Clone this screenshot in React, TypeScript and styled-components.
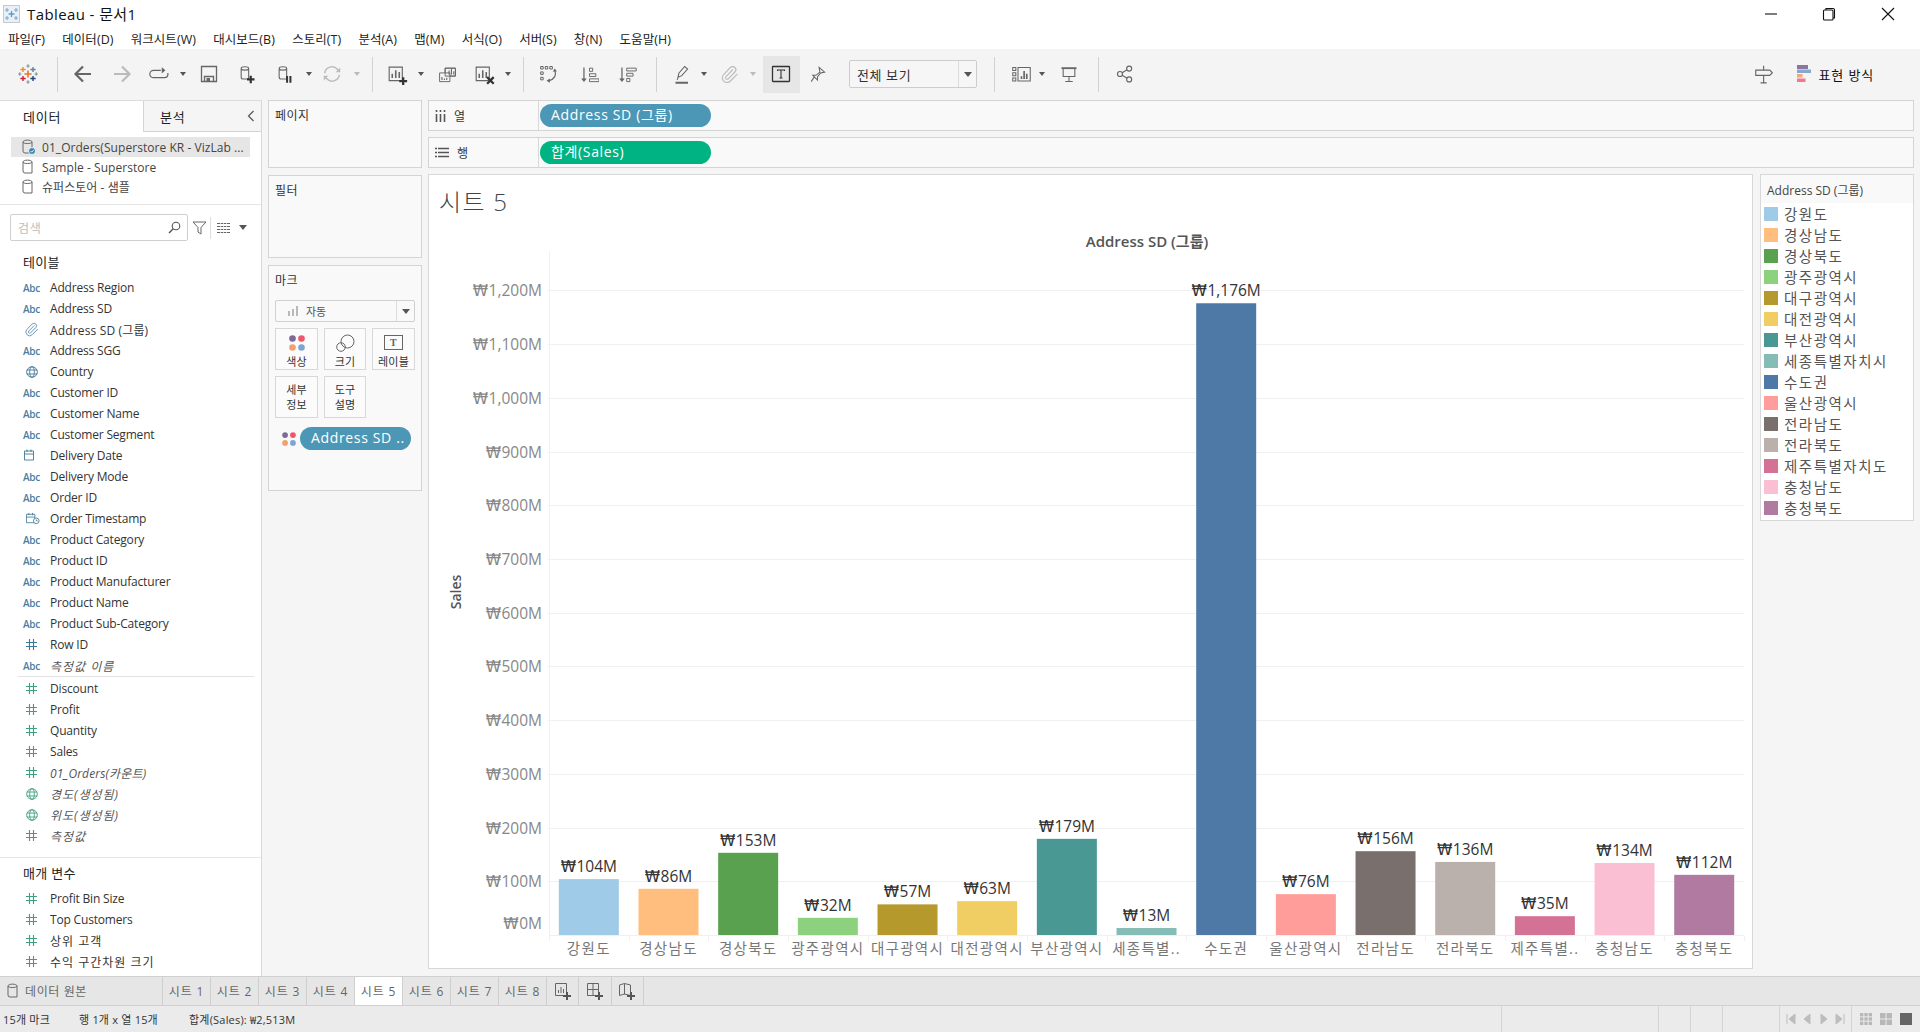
import React from 'react';
import styled, { createGlobalStyle } from 'styled-components';
import { Paperclip } from 'lucide-react';

const FONT = `"Open Sans", "Noto Sans CJK KR", sans-serif`;

const Global = createGlobalStyle`
  html, body { margin: 0; padding: 0; background: #f5f5f5; }
  body { font-family: ${FONT}; color: #333; overflow: hidden; }
  * { box-sizing: border-box; }
`;

const Page = styled.div`
  width: 1920px; height: 1032px; display: flex; flex-direction: column; overflow: hidden;
`;
const TitleBar = styled.div`
  height: 27px; background: #fff; display: flex; align-items: center; padding-left: 3px; gap: 7px; position: relative;
`;
const AppName = styled.span`
  font-size: 15px; color: #111; letter-spacing: 0.4px;
`;
const WinControls = styled.div`
  margin-left: auto; padding-right: 3px; display: flex; align-items: center; height: 100%;
`;
const WinBtn = styled.div`
  width: 58.5px; height: 27px; display: flex; align-items: center; justify-content: center;
`;
const MenuBar = styled.div`
  height: 22px; background: #fff; display: flex; align-items: center; padding-left: 8px; gap: 17.2px;
`;
const MenuItem = styled.span`
  font-size: 12.5px; color: #222; letter-spacing: 0.05px;
`;
const Toolbar = styled.div`
  height: 51px; background: #f4f4f4; display: flex; align-items: center; padding: 0 46px 1px 0;
`;
const Tool = styled.div<{ $w: number; $ml: number; $active?: boolean }>`
  width: ${p => p.$w}px; height: ${p => (p.$active ? 37 : 24)}px; margin-left: ${p => p.$ml}px; flex: none;
  display: flex; align-items: center; justify-content: center;
  background: ${p => (p.$active ? '#e6e6e6' : 'transparent')};
`;
const ToolSep = styled.div`
  width: 100%; height: 35px; background: #d2d2d2;
`;
const Combo = styled.div`
  width: 128px; height: 28px; border: 1px solid #cdcdcd; border-radius: 2px; display: flex; align-items: center; background: #f6f6f6;
`;
const ComboText = styled.span`
  flex: 1; padding-left: 7px; font-size: 13px; color: #333; letter-spacing: 0.6px;
`;
const ComboArrow = styled.div`
  width: 18px; height: 100%; border-left: 1px solid #dcdcdc; display: flex; align-items: center; justify-content: center;
`;
const Caret = styled.span<{ $c?: string }>`
  width: 0; height: 0; border-left: 4px solid transparent; border-right: 4px solid transparent;
  border-top: 5px solid ${p => p.$c || '#555'}; display: block;
`;
const SmallCaret = styled(Caret)`
  border-left-width: 3px; border-right-width: 3px; border-top-width: 4px;
`;
const ToolRight = styled.div`
  margin-left: auto; display: flex; align-items: center;
`;
const ShowMe = styled.div`
  display: flex; align-items: center; gap: 7px; margin-left: 22px; font-size: 13px; color: #111; letter-spacing: 0.85px;
`;

const Workspace = styled.div`
  height: 876px; display: flex; background: #f5f5f5;
`;
const Sidebar = styled.aside`
  width: 262px; background: #fff; border-right: 1px solid #d8d8d8; border-top: 1px solid #dcdcdc; display: flex; flex-direction: column; flex: none; overflow: hidden;
`;
const PaneTabs = styled.div`
  height: 31px; display: flex; flex: none;
`;
const PaneTab = styled.div`
  width: 143px; padding-left: 23px; display: flex; align-items: center; font-size: 13px; color: #222; letter-spacing: 0.8px;
`;
const PaneTabOff = styled(PaneTab)`
  width: 118px; padding: 0 6px 0 16px; background: #f5f5f5; border-left: 1px solid #d4d4d4; border-bottom: 1px solid #d4d4d4; justify-content: space-between;
`;
const SourceList = styled.div`
  padding: 5px 11px 7px; border-bottom: 1px solid #e4e4e4; flex: none;
`;
const SourceRow = styled.div<{ $sel?: boolean }>`
  height: 20px; display: flex; align-items: center; width: 239px; padding-left: 11px; gap: 6px;
  background: ${p => (p.$sel ? '#e6e6e6' : 'transparent')}; font-size: 12px; color: #444; white-space: nowrap; letter-spacing: 0.05px;
`;
const SearchRow = styled.div`
  display: flex; align-items: center; margin: 9px 0 0 10px; height: 27px; flex: none;
`;
const SearchBox = styled.div`
  width: 178px; height: 27px; border: 1px solid #cfcfcf; border-radius: 2px; display: flex; align-items: center; justify-content: space-between; padding: 0 6px 0 7px;
  font-size: 12px; color: #bdbdbd; letter-spacing: 0.8px;
`;
const SearchTool = styled.div`
  width: 22px; display: flex; justify-content: center;
`;
const VRule = styled.div`
  width: 1px; height: 22px; background: #dedede; margin-right: 6px;
`;
const ViewTool = styled.div`
  display: flex; align-items: center; gap: 9px;
`;
const SectionTitle = styled.div<{ $mt: number; $mb: number }>`
  height: 21px; margin: ${p => p.$mt}px 0 ${p => p.$mb}px; padding: 0 0 1px 23px; display: flex; align-items: center; font-size: 13px; color: #222; letter-spacing: 0.3px; flex: none;
`;
const FieldRow = styled.div`
  height: 21px; display: flex; align-items: center; flex: none;
`;
const FieldIcon = styled.div<{ $c: string }>`
  width: 50px; padding-left: 23px; padding-right: 10px; display: flex; align-items: center; justify-content: center; color: ${p => p.$c}; flex: none;
`;
const AbcText = styled.span`
  font-size: 10px; font-weight: 600; letter-spacing: -0.2px; color: #4a7f9f;
`;
const FieldName = styled.span<{ $calc?: boolean; $sp: number }>`
  font-size: 12px; color: ${p => (p.$calc ? '#555' : '#333')}; font-style: ${p => (p.$calc ? 'italic' : 'normal')}; white-space: nowrap; letter-spacing: ${p => p.$sp}px;
`;
const FieldRule = styled.div`
  height: 1px; margin: 0 7px 1px 18px; background: #e2e2e2; flex: none;
`;
const PaneRule = styled.div`
  height: 1px; margin-top: 11px; background: #e6e6e6; flex: none;
`;

const Cards = styled.div`
  width: 154px; margin-left: 6px; display: flex; flex-direction: column; gap: 7px; flex: none;
`;
const Card = styled.section<{ $h: number }>`
  height: ${p => p.$h}px; border: 1px solid #d4d4d4; background: #f9f9f9; padding: 5px 6px 6px; display: flex; flex-direction: column; flex: none;
`;
const CardTitle = styled.div`
  font-size: 12px; color: #333; height: 19px; line-height: 19px; letter-spacing: 0.5px; flex: none;
`;
const MarkSelect = styled.div`
  margin-top: 10px; height: 22px; border: 1px solid #d0d0d0; border-radius: 2px; display: flex; align-items: center; flex: none;
  font-size: 11px; color: #555; background: #f9f9f9;
`;
const MarkSelectLabel = styled.div`
  flex: 1; display: flex; align-items: center; gap: 7px; padding-left: 12px;
`;
const MarkSelectArrow = styled.div`
  width: 18px; height: 100%; border-left: 1px solid #dcdcdc; display: flex; align-items: center; justify-content: center;
`;
const MarkGrid = styled.div`
  margin-top: 6px; display: grid; grid-template-columns: 43px 42px 43px; grid-auto-rows: 42px; gap: 6px; flex: none;
`;
const MarkBtn = styled.div<{ $two?: boolean }>`
  border: 1px solid #d8d8d8; background: #fbfbfb; display: flex; flex-direction: column; align-items: center;
  justify-content: ${p => (p.$two ? 'center' : 'flex-start')}; padding-top: ${p => (p.$two ? 0 : 3)}px;
  font-size: 11px; line-height: 15px; color: #333; letter-spacing: 0.2px; text-align: center;
`;
const MarkBtnIcon = styled.div`
  height: 22px; display: flex; align-items: center; justify-content: center;
`;
const MarkPillRow = styled.div`
  margin-top: 9px; padding-left: 7px; display: flex; align-items: center; gap: 4px; flex: none;
`;
const Pill = styled.div<{ $c: string; $w: number }>`
  width: ${p => p.$w}px; height: 23px; border-radius: 12px; background: ${p => p.$c}; color: #fff; font-size: 14px; display: flex; align-items: center; padding: 0 0 3px 11px; white-space: nowrap; letter-spacing: 0.65px; flex: none;
`;

const Main = styled.div`
  width: 1486px; margin-left: 6px; display: flex; flex-direction: column; flex: none;
`;
const Shelf = styled.div`
  height: 31px; margin-bottom: 6px; border: 1px solid #d4d4d4; background: #f9f9f9; display: flex; align-items: center; flex: none;
`;
const ShelfLabel = styled.div`
  width: 110px; height: 100%; border-right: 1px solid #d8d8d8; display: flex; align-items: center; padding-left: 6px; gap: 8px; font-size: 12px; color: #333;
  margin-right: 1px;
`;
const Content = styled.div`
  display: flex; gap: 7px; flex: none;
`;
const ChartCard = styled.section`
  width: 1325px; height: 795px; background: #fff; border: 1px solid #d8d8d8; display: flex; flex-direction: column; flex: none;
`;
const SheetTitle = styled.h1`
  margin: 0; height: 56px; padding: 11px 0 0 10px; font-size: 24px; line-height: 32px; font-weight: 300; color: #444; letter-spacing: 1.3px; flex: none;
`;
const LegendCard = styled.aside`
  width: 154px; height: 347px; background: #fff; border: 1px solid #d8d8d8; display: flex; flex-direction: column; flex: none;
`;
const LegendHead = styled.div`
  height: 28px; background: #f9f9f9; padding: 1px 0 0 6px; display: flex; align-items: center; font-size: 12px; color: #444; flex: none;
`;
const LegendRow = styled.div`
  height: 21px; padding-left: 3px; display: flex; align-items: center; gap: 6px; font-size: 14.5px; color: #555; letter-spacing: 1.5px; flex: none;
`;
const Swatch = styled.span<{ $c: string }>`
  width: 14px; height: 14px; background: ${p => p.$c}; flex: none;
`;

const TabBar = styled.div`
  height: 30px; background: #e6e6e6; border-top: 1px solid #d0d0d0; border-bottom: 1px solid #d0d0d0; display: flex; flex: none;
`;
const SourceTab = styled.div`
  width: 163px; border-right: 1px solid #cfcfcf; display: flex; align-items: center; padding-left: 7px; gap: 4px; font-size: 12px; color: #666; letter-spacing: 0.6px;
`;
const SheetTab = styled.div<{ $on?: boolean }>`
  width: 48px; border-right: 1px solid #cfcfcf; display: flex; align-items: center; justify-content: center; font-size: 12px; letter-spacing: 0.8px;
  color: #666; background: ${p => (p.$on ? '#fff' : 'transparent')};
`;
const AddTab = styled.div`
  width: 32.3px; border-right: 1px solid #cfcfcf; display: flex; align-items: center; justify-content: center;
`;
const StatusBar = styled.div`
  height: 26px; background: #ebebeb; display: flex; align-items: center; font-size: 11px; color: #333; flex: none;
`;
const StatusText = styled.span<{ $w: number; $pl: number }>`
  width: ${p => p.$w}px; padding-left: ${p => p.$pl}px; white-space: nowrap; flex: none; letter-spacing: 0.2px;
`;
const StatusCell = styled.div<{ $w: number }>`
  width: ${p => p.$w}px; height: 100%; border-left: 1px solid #d4d4d4; display: flex; align-items: center; justify-content: space-evenly; flex: none;
`;

const AxisText = styled.text`
  font-family: ${FONT}; font-size: 15.5px; fill: #888;
`;
const CatText = styled.text`
  font-family: ${FONT}; font-size: 14.5px; fill: #777; letter-spacing: 1.3px;
`;
const ValueText = styled.text`
  font-family: ${FONT}; font-size: 15.5px; fill: #333;
`;
const WonSign = styled.tspan`
  font-family: "DejaVu Sans", sans-serif; font-size: 15.5px; letter-spacing: 0.5px;
`;
const ChartHead = styled.text`
  font-family: ${FONT}; font-size: 15px; font-weight: 600; fill: #555;
`;
const AxisName = styled.text`
  font-family: ${FONT}; font-size: 14px; font-weight: 600; fill: #555;
`;

/* ---------- icons ---------- */
type IP = { c?: string };
const S: React.FC<React.PropsWithChildren<{ s?: number; v?: string; c?: string; sw?: number }>> = ({ s = 24, v = '0 0 24 24', c = '#666', sw = 1.3, children }) => (
  <svg width={s} height={s} viewBox={v} fill="none" stroke={c} strokeWidth={sw}>{children}</svg>
);
const Cross: React.FC<{ x: number; y: number; r: number; c: string; w?: number }> = ({ x, y, r, c, w = 1.4 }) => (
  <path d={`M${x - r} ${y}H${x + r}M${x} ${y - r}V${y + r}`} stroke={c} strokeWidth={w} fill="none" />
);
const TableauLogo = () => (
  <S s={20} v="0 0 20 20">
    <Cross x={10} y={10} r={3.6} c="#e8762d" w={1.6} />
    <Cross x={5} y={5.5} r={2.6} c="#e8912d" />
    <Cross x={15} y={5.5} r={2.6} c="#5b879b" />
    <Cross x={5} y={14.5} r={2.6} c="#c72037" />
    <Cross x={15} y={14.5} r={2.6} c="#1f447a" />
    <Cross x={10} y={2} r={1.7} c="#7099a6" w={1.1} />
    <Cross x={10} y={18} r={1.7} c="#7099a6" w={1.1} />
    <Cross x={1.8} y={10} r={1.7} c="#7099a6" w={1.1} />
    <Cross x={18.2} y={10} r={1.7} c="#7099a6" w={1.1} />
  </S>
);
const WinLogo = () => (
  <svg width="17" height="20" viewBox="0 0 17 20" fill="none">
    <rect x="0.5" y="1.5" width="16" height="17" fill="#eaf0f5" stroke="#c9c9c9" />
    <Cross x={8.5} y={10} r={3} c="#5d9ccc" w={1.4} />
    <Cross x={4} y={6} r={2} c="#77aed6" w={1.1} />
    <Cross x={13} y={6} r={2} c="#77aed6" w={1.1} />
    <Cross x={4} y={14} r={2} c="#77aed6" w={1.1} />
    <Cross x={13} y={14} r={2} c="#77aed6" w={1.1} />
  </svg>
);
const Back = ({ c = '#666' }: IP) => <S c={c} sw={2.2}><path d="M20 12H5M12 4.5L4.5 12l7.5 7.5" /></S>;
const Forward = ({ c = '#bbb' }: IP) => <S c={c} sw={2.2}><path d="M4 12h15M12 4.5l7.5 7.5L12 19.5" /></S>;
const Redo = () => <S s={22}><path d="M14 8H6a3.7 3.7 0 0 0 0 8h12a3.7 3.7 0 0 0 3.7-3.7V11" /><path d="M15 4.5V11.5L19 8z" fill="#666" stroke="none" /></S>;
const Save = () => <S><path d="M4.5 4.5h15v15h-15z" /><path d="M7.5 19.5v-5h9v5" /><rect x="9.5" y="16" width="3.5" height="3.5" fill="#666" stroke="none" /></S>;
const Cyl = () => <path d="M5 5.5c0-3 9-3 9 0v12.5H7.5a2.5 2.5 0 0 1-2.5-2.5zM5 5.5c0 2.5 9 2.5 9 0" />;
const NewDs = () => <S s={20}><Cyl /><path d="M12 18.5h9M16.5 14v9" stroke="#333" strokeWidth="2.6" /></S>;
const PauseDs = () => <S s={20}><Cyl /><path d="M14.5 14.5v8M18.5 14.5v8" stroke="#333" strokeWidth="2.4" /></S>;
const Refresh = () => <S s={22} c="#bbb" sw={1.6}><path d="M4 11a8 8 0 0 1 14-4l2 2M20 13a8 8 0 0 1-14 4l-2-2" /><path d="M21 5v5h-5zM3 19v-5h5z" fill="#bbb" stroke="none" /></S>;
const Bars = ({ x = 0, y = 0 }: { x?: number; y?: number }) => (
  <g transform={`translate(${x} ${y})`} stroke="#666" strokeWidth="1.8"><path d="M8 17v-5M12 17V8M16 17v-7" /></g>
);
const NewSheet = () => <S s={21}><path d="M2.5 3.5h15v15.5h-15z" /><Bars x={-2} y={-1} /><path d="M14 19.5h9M18.5 15v9" stroke="#333" strokeWidth="2.6" /></S>;
const DupSheet = () => (
  <S s={19} sw={1.2}>
    <path d="M9 4h13v10H9zM2 10h13v11H2z" fill="#f4f4f4" /><path d="M9 10V4h13v10h-7" /><path d="M14 12V7M17 12V5M20 12V8M5 19v-4M8 19v-2M11 19v-3" strokeWidth="1.4" />
  </S>
);
const ClearSheet = () => <S s={21}><path d="M2.5 3.5h15v15.5h-15z" /><Bars x={-2} y={-1} /><path d="M15 15l7.5 7.5M22.5 15L15 22.5" stroke="#333" strokeWidth="2.6" /></S>;
const Swap = () => (
  <S s={20} sw={1.2}><path d="M2 3h3v3H2zM7.5 3h3v3h-3zM13 3h3v3h-3zM2 9.5h3v3H2zM2 16h3v3H2z" /><path d="M19 8c2 5 0 10-7 12" strokeWidth="1.4" /><path d="M16.5 9h5l-2.5-3.5zM13 17.5v5l-4-2.5z" fill="#666" stroke="none" /></S>
);
const SortAsc = () => (
  <S s={19} sw={1.2}><path d="M5 3v15" strokeWidth="1.6" /><path d="M1.5 17h7L5 21.5z" fill="#666" stroke="none" /><path d="M12 4h4v4h-4zM12 11h8v3.5h-8zM12 17.5h12v3.5H12z" /></S>
);
const SortDesc = () => (
  <S s={19} sw={1.2}><path d="M5 3v15" strokeWidth="1.6" /><path d="M1.5 17h7L5 21.5z" fill="#666" stroke="none" /><path d="M11 4h12v3.5H11zM11 10.5h8V14h-8zM11 17h4v4h-4z" /></S>
);
const Pen = () => (
  <S s={20} sw={1.3}><path d="M6 16l1-5 7-8 3.5 3-7 8zM6 16l-1 3" /><path d="M3 22.5h15" stroke="#666" strokeWidth="2.4" /></S>
);
const TextBox = () => <S><rect x="3.5" y="4.5" width="17" height="15" stroke="#333" rx="0.5" /><path d="M8.5 9V8h7v1M12 8v8M10.5 16h3" stroke="#333" strokeWidth="1.1" /></S>;
const PinIcon = () => (
  <S s={19} sw={1.3}><path d="M14 3l7 6-5 1-4 5 0 4-6-6 4 0 5-4zM8 15l-4 6" /></S>
);
const Present = () => (
  <S s={20}><path d="M3 5h18" strokeWidth="2.2" /><path d="M5 5v10h14V5M12 15v6M7.5 21h9" /></S>
);
const ShowCards = () => (
  <S s={21} sw={1.2}><path d="M2 4h3.5v3.5H2zM2 10h3.5v3.5H2zM2 16h3.5v3.5H2zM8 4h14v15.5H8z" /><path d="M12 17v-3M15 17V8M18 17v-6" strokeWidth="1.9" /></S>
);
const Share = () => (
  <S s={20} sw={1.4}><circle cx="6" cy="12" r="3" /><circle cx="17" cy="5.5" r="3" /><circle cx="17" cy="18.5" r="3" /><path d="M8.7 10.5l5.7-3.5M8.7 13.5l5.7 3.5" /></S>
);
const Sign = () => (
  <S s={21} c="#666" sw={1.3}><path d="M2 7h16l3 3-3 3H2zM11 2v5M11 13v9M7.5 21.5h7" /></S>
);
const StackedBars = () => (
  <svg width="15" height="20" viewBox="0 0 15 20"><rect x="0" y="1" width="11" height="4" fill="#8c76a0" /><rect x="0" y="5.5" width="14" height="3.5" fill="#85a8cf" /><rect x="0" y="10" width="5.5" height="3.5" fill="#f3a67c" /><rect x="0" y="14.5" width="8.5" height="3.5" fill="#f4788a" /></svg>
);
const Minimize = () => <svg width="14" height="14" viewBox="0 0 14 14"><path d="M1 7h12" stroke="#111" strokeWidth="1.1" /></svg>;
const Restore = () => <svg width="14" height="14" viewBox="0 0 14 14" fill="none" stroke="#111" strokeWidth="1.1"><rect x="1.5" y="3" width="9.5" height="10" rx="1" /><path d="M4 3V1.5h7a1.5 1.5 0 0 1 1.5 1.5v8H11" /></svg>;
const Close = () => <svg width="14" height="14" viewBox="0 0 14 14"><path d="M1 1l12 12M13 1L1 13" stroke="#111" strokeWidth="1.1" /></svg>;
const Chevron = () => <svg width="8" height="12" viewBox="0 0 8 12" fill="none" stroke="#555" strokeWidth="1.2"><path d="M6.5 1L1.5 6l5 5" /></svg>;
const Db = ({ check }: { check?: boolean }) => (
  <svg width="14" height="16" viewBox="0 0 14 16" fill="none" stroke="#666" strokeWidth="1">
    <path d="M1 3c0-2.5 9-2.5 9 0v11H3a2 2 0 0 1-2-2zM1 3c0 2 9 2 9 0" />
    {check && <circle cx="10" cy="12" r="3.5" fill="#3d85ad" stroke="#fff" strokeWidth="0.8" />}
    {check && <path d="M8.5 12l1.2 1.2 2-2.2" stroke="#fff" strokeWidth="0.9" />}
  </svg>
);
const Magnify = () => <svg width="13" height="13" viewBox="0 0 13 13" fill="none" stroke="#555" strokeWidth="1.1"><circle cx="8" cy="5" r="3.8" /><path d="M5.2 7.8L1 12" strokeWidth="1.4" /></svg>;
const Funnel = () => <svg width="15" height="15" viewBox="0 0 15 15" fill="none" stroke="#666" strokeWidth="1"><path d="M1 2h13L9 7.5V14L6 12V7.5z" /></svg>;
const ListIcon = () => <svg width="13" height="10" viewBox="0 0 13 10" stroke="#666" strokeWidth="1" fill="none"><path d="M0 .5h13M0 3.5h13M0 6.5h13M0 9.5h13" /><path d="M3.5 0v10M6.5 0v10M9.5 0v10" stroke="#f7f7f7" strokeWidth="0.7" /></svg>;
const Hash = ({ c }: { c: string }) => <svg width="11" height="11" viewBox="0 0 11 11" stroke={c} strokeWidth="1.1" fill="none"><path d="M3.5 0v11M7.5 0v11M0 3.5h11M0 7.5h11" /></svg>;
const Globe = ({ c }: { c: string }) => <svg width="12" height="12" viewBox="0 0 12 12" stroke={c} strokeWidth="0.9" fill="none"><circle cx="6" cy="6" r="5.3" /><ellipse cx="6" cy="6" rx="2.3" ry="5.3" /><path d="M0.8 4h10.4M0.8 8h10.4" /></svg>;
const Cal = ({ clock }: { clock?: boolean }) => (
  <svg width="15" height="13" viewBox="0 0 15 13" stroke="#3f7896" strokeWidth="0.9" fill="none" style={{ marginLeft: clock ? 3 : 0 }}>
    <path d="M.5 2h9v9h-9zM.5 5h9M3 .5V3M7 .5V3" />{clock && <circle cx="11" cy="9" r="3" fill="#fff" />}{clock && <path d="M11 7.5V9h1.5" />}
  </svg>
);
const ColorDots = ({ s = 16 }: { s?: number }) => (
  <svg width={s} height={s} viewBox="0 0 16 16"><circle cx="3.5" cy="3.5" r="3.3" fill="#7d6a97" /><circle cx="12.5" cy="3.5" r="3.3" fill="#f0566b" /><circle cx="3.5" cy="12.5" r="3.3" fill="#f2a06e" /><circle cx="12.5" cy="12.5" r="3.3" fill="#7ea4d2" /></svg>
);
const SizeIcon = () => <svg width="19" height="19" viewBox="0 0 19 19" fill="none" stroke="#666" strokeWidth="1"><circle cx="11.5" cy="7.5" r="6.5" /><circle cx="5" cy="13" r="4.3" /></svg>;
const LabelIcon = () => <svg width="19" height="16" viewBox="0 0 19 16" fill="none" stroke="#666" strokeWidth="1"><rect x=".5" y=".5" width="18" height="14" /><text x="9.5" y="11" textAnchor="middle" fontSize="10" fontWeight="700" fill="#666" stroke="none" fontFamily="Liberation Serif, serif">T</text></svg>;
const MiniBars = () => <svg width="11" height="10" viewBox="0 0 11 10" stroke="#aaa" strokeWidth="1.6"><path d="M1 10V5M5 10V3M9 10V0" /></svg>;
const ColsIcon = () => <svg width="11" height="12" viewBox="0 0 11 12" stroke="#555" strokeWidth="1.6"><path d="M1.5 4v8M5.5 4v8M9.5 4v8" /><path d="M1.5 0v2M5.5 0v2M9.5 0v2" /></svg>;
const RowsIcon = () => <svg width="14" height="11" viewBox="0 0 14 11" stroke="#555" strokeWidth="1.5"><path d="M3 1.5h11M3 5.5h11M3 9.5h11M0 1.5h2M0 5.5h2M0 9.5h2" /></svg>;
const AddSheet = ({ kind }: { kind: 'sheet' | 'dash' | 'story' }) => (
  <svg width="20" height="20" viewBox="0 0 20 20" fill="none" stroke="#666" strokeWidth="1">
    {kind === 'sheet' && <path d="M2.5 2.5h11v12h-11zM5.5 12V9M8 12V6M10.5 12V8" />}
    {kind === 'dash' && <path d="M2.5 2.5h11v12h-11zM8 2.5v12M2.5 8.5h11" />}
    {kind === 'story' && <path d="M2.5 4l5-1.5 6 1.5v10.5l-6-1.5-5 1.5zM7.5 2.5v11" />}
    <path d="M10 15h8M14 11v8" stroke="#555" strokeWidth="2" />
  </svg>
);
const NavIcon = ({ d }: { d: string }) => <svg width="10" height="12" viewBox="0 0 10 12" fill="#bdbdbd" stroke="#bdbdbd" strokeWidth="1"><path d={d} /></svg>;
const GridView = ({ n, c, size }: { n: number; c: string; size: number }) => {
  const cell = (size - (n - 1)) / n;
  const rects: React.ReactNode[] = [];
  for (let i = 0; i < n; i++) for (let j = 0; j < n; j++) rects.push(<rect key={`${i}${j}`} x={i * (cell + 1)} y={j * (cell + 1)} width={cell} height={cell} fill={c} />);
  return <svg width={size} height={size} viewBox={`0 0 ${size} ${size}`}>{rects}</svg>;
};

/* ---------- data ---------- */
const MENU = ['파일(F)', '데이터(D)', '워크시트(W)', '대시보드(B)', '스토리(T)', '분석(A)', '맵(M)', '서식(O)', '서버(S)', '창(N)', '도움말(H)'];
type TT = { x: number; w: number; n?: React.ReactNode; active?: boolean };
const arrow = (c?: string) => <SmallCaret $c={c} />;
const TOOLS: TT[] = [
  { x: 28, w: 24, n: <TableauLogo /> }, { x: 57, w: 1, n: <ToolSep /> },
  { x: 83, w: 24, n: <Back /> }, { x: 122, w: 24, n: <Forward /> }, { x: 159, w: 24, n: <Redo /> }, { x: 183, w: 8, n: arrow() },
  { x: 209, w: 24, n: <Save /> }, { x: 247, w: 24, n: <NewDs /> }, { x: 285, w: 24, n: <PauseDs /> }, { x: 309, w: 8, n: arrow() },
  { x: 332, w: 24, n: <Refresh /> }, { x: 357, w: 8, n: arrow('#bbb') }, { x: 372, w: 1, n: <ToolSep /> },
  { x: 397, w: 24, n: <NewSheet /> }, { x: 421, w: 8, n: arrow() }, { x: 447, w: 24, n: <DupSheet /> }, { x: 484, w: 24, n: <ClearSheet /> }, { x: 508, w: 8, n: arrow() },
  { x: 523, w: 1, n: <ToolSep /> }, { x: 549, w: 24, n: <Swap /> }, { x: 589, w: 24, n: <SortAsc /> }, { x: 627, w: 24, n: <SortDesc /> }, { x: 656, w: 1, n: <ToolSep /> },
  { x: 683, w: 24, n: <Pen /> }, { x: 704, w: 8, n: arrow() }, { x: 729, w: 24, n: <Paperclip size={19} color="#bbb" strokeWidth={1.4} /> }, { x: 753, w: 8, n: arrow('#bbb') },
  { x: 781, w: 37, n: <TextBox />, active: true }, { x: 817, w: 24, n: <PinIcon /> },
  { x: 913, w: 128, n: <Combo><ComboText>전체 보기</ComboText><ComboArrow><Caret /></ComboArrow></Combo> },
  { x: 994, w: 1, n: <ToolSep /> }, { x: 1021, w: 24, n: <ShowCards /> }, { x: 1042, w: 8, n: arrow() }, { x: 1069, w: 24, n: <Present /> }, { x: 1098, w: 1, n: <ToolSep /> }, { x: 1125, w: 24, n: <Share /> },
];
const placed = TOOLS.map((t, i) => {
  const prev = TOOLS[i - 1];
  const prevRight = prev ? prev.x + prev.w / 2 : 0;
  return { ...t, ml: t.x - t.w / 2 - prevRight };
});

type Kind = 'abc' | 'clip' | 'geo' | 'cal' | 'ts' | 'dim' | 'num' | 'geoM';
const DIMS: [Kind, string, boolean?][] = [
  ['abc', 'Address Region'], ['abc', 'Address SD'], ['clip', 'Address SD (그룹)'], ['abc', 'Address SGG'], ['geo', 'Country'],
  ['abc', 'Customer ID'], ['abc', 'Customer Name'], ['abc', 'Customer Segment'], ['cal', 'Delivery Date'], ['abc', 'Delivery Mode'],
  ['abc', 'Order ID'], ['ts', 'Order Timestamp'], ['abc', 'Product Category'], ['abc', 'Product ID'], ['abc', 'Product Manufacturer'],
  ['abc', 'Product Name'], ['abc', 'Product Sub-Category'], ['dim', 'Row ID'], ['abc', '측정값 이름', true],
];
const MEAS: [Kind, string, boolean?][] = [
  ['num', 'Discount'], ['num', 'Profit'], ['num', 'Quantity'], ['num', 'Sales'], ['num', '01_Orders(카운트)', true],
  ['geoM', '경도(생성됨)', true], ['geoM', '위도(생성됨)', true], ['num', '측정값', true],
];
const PARAMS: [Kind, string, boolean?][] = [['num', 'Profit Bin Size'], ['num', 'Top Customers'], ['num', '상위 고객'], ['num', '수익 구간차원 크기']];

const BLUE = '#3f7896';
const GREEN = '#3fa07f';
const fieldIcon = (k: Kind) => {
  switch (k) {
    case 'abc': return <AbcText>Abc</AbcText>;
    case 'clip': return <Paperclip size={15} color="#5d93b3" strokeWidth={1.5} />;
    case 'geo': return <Globe c={BLUE} />;
    case 'geoM': return <Globe c={GREEN} />;
    case 'cal': return <Cal />;
    case 'ts': return <Cal clock />;
    case 'dim': return <Hash c={BLUE} />;
    default: return <Hash c={GREEN} />;
  }
};
const spacing = (n: string) => (/^[가-힣]/.test(n) ? 1 : /[가-힣]/.test(n) ? 0.15 : -0.18);
const Fields = ({ rows }: { rows: [Kind, string, boolean?][] }) => (
  <>
    {rows.map(([k, n, calc]) => (
      <FieldRow key={n}>
        <FieldIcon $c={k === 'num' || k === 'geoM' ? GREEN : BLUE}>{fieldIcon(k)}</FieldIcon>
        <FieldName $calc={calc} $sp={spacing(n)}>{n}</FieldName>
      </FieldRow>
    ))}
  </>
);

const BARS = [
  ['강원도', '강원도', 104, '#a0cbe8'], ['경상남도', '경상남도', 86, '#ffbe7d'], ['경상북도', '경상북도', 153, '#59a14f'],
  ['광주광역시', '광주광역시', 32, '#8cd17d'], ['대구광역시', '대구광역시', 57, '#b6992d'], ['대전광역시', '대전광역시', 63, '#f1ce63'],
  ['부산광역시', '부산광역시', 179, '#499894'], ['세종특별자치시', '세종특별..', 13, '#86bcb6'], ['수도권', '수도권', 1176, '#4e79a7'],
  ['울산광역시', '울산광역시', 76, '#ff9d9a'], ['전라남도', '전라남도', 156, '#79706e'], ['전라북도', '전라북도', 136, '#bab0ac'],
  ['제주특별자치도', '제주특별..', 35, '#d37295'], ['충청남도', '충청남도', 134, '#fabfd2'], ['충청북도', '충청북도', 112, '#b07aa1'],
] as [string, string, number, string][];

const BASE = 935, SCALE = 0.5372, LEFT = 549, STEP = 79.67, RIGHT = 1744;
const TICKS = [0, 100, 200, 300, 400, 500, 600, 700, 800, 900, 1000, 1100, 1200];
const Money = ({ v }: { v: number }) => <><WonSign>₩</WonSign>{v.toLocaleString('en-US')}M</>;

const BarChart = () => (
  <svg width="1323" height="737" viewBox="429 231 1323 737" style={{ display: 'block' }} role="img">
    <ChartHead x={1147} y={247} textAnchor="middle">Address SD (그룹)</ChartHead>
    <AxisName transform="translate(461 592) rotate(-90)" textAnchor="middle">Sales</AxisName>
    {TICKS.map(t => {
      const y = Math.round(BASE - t * SCALE) + 0.5;
      return (
        <g key={t}>
          {t > 0 && <path d={`M${LEFT - 1} ${y}H${RIGHT}`} stroke="#f0f0f0" />}
          <AxisText x={542} y={t === 0 ? 929 : y + 5} textAnchor="end"><Money v={t} /></AxisText>
        </g>
      );
    })}
    <path d={`M${LEFT}.5 251V941`} stroke="#f0f0f0" />
    <path d={`M${LEFT} 935.5H${RIGHT}`} stroke="#f0f0f0" />
    {BARS.map(([name, short, v, c], i) => {
      const cx = LEFT + STEP * (i + 0.5);
      const h = v * SCALE;
      return (
        <g key={name}>
          <rect x={cx - 30} y={BASE - h} width={60} height={h} fill={c} />
          <ValueText x={cx} y={BASE - h - 7} textAnchor="middle"><Money v={v} /></ValueText>
          <CatText x={cx} y={954} textAnchor="middle">{short}</CatText>
          <path d={`M${Math.round(LEFT + STEP * (i + 1))}.5 936v5`} stroke="#f0f0f0" />
        </g>
      );
    })}
  </svg>
);

export default function App() {
  return (
    <Page>
      <Global />
      <TitleBar>
        <WinLogo />
        <AppName>Tableau - 문서1</AppName>
        <WinControls>
          <WinBtn><Minimize /></WinBtn>
          <WinBtn><Restore /></WinBtn>
          <WinBtn><Close /></WinBtn>
        </WinControls>
      </TitleBar>
      <MenuBar>{MENU.map(m => <MenuItem key={m}>{m}</MenuItem>)}</MenuBar>
      <Toolbar>
        {placed.map(t => <Tool key={t.x} $w={t.w} $ml={t.ml} $active={t.active}>{t.n}</Tool>)}
        <ToolRight>
          <Sign />
          <ShowMe><StackedBars />표현 방식</ShowMe>
        </ToolRight>
      </Toolbar>
      <Workspace>
        <Sidebar>
          <PaneTabs>
            <PaneTab>데이터</PaneTab>
            <PaneTabOff>분석<Chevron /></PaneTabOff>
          </PaneTabs>
          <SourceList>
            <SourceRow $sel><Db check />01_Orders(Superstore KR - VizLab ...</SourceRow>
            <SourceRow><Db />Sample - Superstore</SourceRow>
            <SourceRow><Db />슈퍼스토어 - 샘플</SourceRow>
          </SourceList>
          <SearchRow>
            <SearchBox>검색<Magnify /></SearchBox>
            <SearchTool><Funnel /></SearchTool>
            <VRule />
            <ViewTool><ListIcon /><Caret /></ViewTool>
          </SearchRow>
          <SectionTitle $mt={10} $mb={5}>테이블</SectionTitle>
          <Fields rows={DIMS} />
          <FieldRule />
          <Fields rows={MEAS} />
          <PaneRule />
          <SectionTitle $mt={4} $mb={5}>매개 변수</SectionTitle>
          <Fields rows={PARAMS} />
        </Sidebar>
        <Cards>
          <Card $h={68}><CardTitle>페이지</CardTitle></Card>
          <Card $h={83}><CardTitle>필터</CardTitle></Card>
          <Card $h={226}>
            <CardTitle>마크</CardTitle>
            <MarkSelect>
              <MarkSelectLabel><MiniBars />자동</MarkSelectLabel>
              <MarkSelectArrow><Caret /></MarkSelectArrow>
            </MarkSelect>
            <MarkGrid>
              <MarkBtn><MarkBtnIcon><ColorDots /></MarkBtnIcon>색상</MarkBtn>
              <MarkBtn><MarkBtnIcon><SizeIcon /></MarkBtnIcon>크기</MarkBtn>
              <MarkBtn><MarkBtnIcon><LabelIcon /></MarkBtnIcon>레이블</MarkBtn>
              <MarkBtn $two>세부<br />정보</MarkBtn>
              <MarkBtn $two>도구<br />설명</MarkBtn>
            </MarkGrid>
            <MarkPillRow><ColorDots s={14} /><Pill $c="#4c97b6" $w={111}>Address SD ..</Pill></MarkPillRow>
          </Card>
        </Cards>
        <Main>
          <Shelf>
            <ShelfLabel><ColsIcon />열</ShelfLabel>
            <Pill $c="#4c97b6" $w={171}>Address SD (그룹)</Pill>
          </Shelf>
          <Shelf>
            <ShelfLabel><RowsIcon />행</ShelfLabel>
            <Pill $c="#00b383" $w={171}>합계(Sales)</Pill>
          </Shelf>
          <Content>
            <ChartCard>
              <SheetTitle>시트 5</SheetTitle>
              <BarChart />
            </ChartCard>
            <LegendCard>
              <LegendHead>Address SD (그룹)</LegendHead>
              {BARS.map(([name, , , c]) => (
                <LegendRow key={name}><Swatch $c={c} />{name}</LegendRow>
              ))}
            </LegendCard>
          </Content>
        </Main>
      </Workspace>
      <TabBar>
        <SourceTab><Db />데이터 원본</SourceTab>
        {[1, 2, 3, 4, 5, 6, 7, 8].map(n => <SheetTab key={n} $on={n === 5}>시트 {n}</SheetTab>)}
        <AddTab><AddSheet kind="sheet" /></AddTab>
        <AddTab><AddSheet kind="dash" /></AddTab>
        <AddTab><AddSheet kind="story" /></AddTab>
      </TabBar>
      <StatusBar>
        <StatusText $w={79} $pl={3}>15개 마크</StatusText>
        <StatusText $w={110} $pl={0}>행 1개 x 열 15개</StatusText>
        <StatusText $w={1312} $pl={0}>합계(Sales): ₩2,513M</StatusText>
        <StatusCell $w={157} />
        <StatusCell $w={32} />
        <StatusCell $w={32} />
        <StatusCell $w={57} />
        <StatusCell $w={72}>
          <NavIcon d="M1 1v10M9 1L3 6l6 5z" />
          <NavIcon d="M8 1L2 6l6 5z" />
          <NavIcon d="M2 1l6 5-6 5z" />
          <NavIcon d="M1 1l6 5-6 5zM9 1v10" />
        </StatusCell>
        <StatusCell $w={69}>
          <GridView n={3} c="#b8b8b8" size={12} />
          <GridView n={2} c="#b8b8b8" size={12} />
          <GridView n={1} c="#666" size={12} />
        </StatusCell>
      </StatusBar>
    </Page>
  );
}
